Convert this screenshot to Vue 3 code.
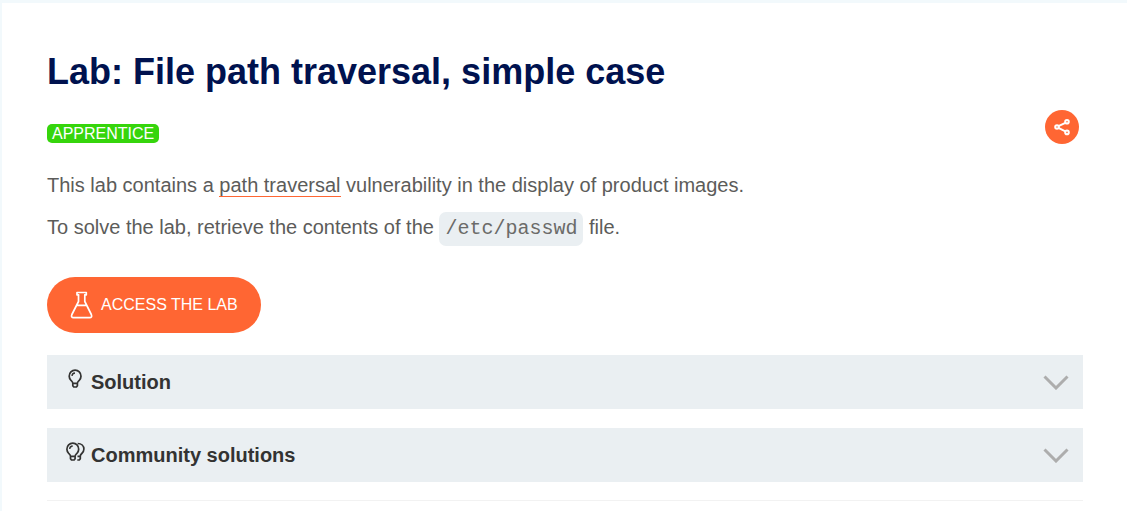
<script setup>
const sections = [
  { id: 'solution', title: 'Solution', double: false },
  { id: 'community', title: 'Community solutions', double: true },
]
</script>

<template>
  <main class="page">
    <h1 class="title">Lab: File path traversal, simple case</h1>

    <div class="meta">
      <span class="level">APPRENTICE</span>
      <button class="share" type="button" aria-label="Share">
        <svg width="34" height="34" viewBox="0 0 34 34" fill="none" stroke="#fff" stroke-width="2" aria-hidden="true">
          <path d="M13.4 16.2 20.4 12.8M13.4 17.9 20.4 21.4" />
          <circle cx="12" cy="17" r="1.800" />
          <circle cx="22" cy="11.800" r="1.800" />
          <circle cx="22" cy="22.400" r="1.800" />
        </svg>
      </button>
    </div>

    <p class="text">This lab contains a <a class="link" href="#path-traversal">path traversal</a> vulnerability in the display of product images.</p>
    <p class="text">To solve the lab, retrieve the contents of the <code class="code">/etc/passwd</code> file.</p>

    <a class="access" href="#access-lab">
      <svg width="24" height="28" viewBox="0 0 24 28" fill="none" stroke="#fff" stroke-width="1.700" stroke-linejoin="round" stroke-linecap="round" aria-hidden="true">
        <path d="M8.500 4V10.500L1.900 23.500C1 25.500 1.800 26.700 3.500 26.700H19.700C21.400 26.700 22.200 25.500 21.300 23.500L14.800 10.500V4M7 14.300H16.300" />
        <path d="M7 1.500H16.300V3.800H14.800M7 1.500V3.800H8.500" />
      </svg>
      <span>ACCESS THE LAB</span>
    </a>

    <details v-for="s in sections" :key="s.id" class="panel">
      <summary class="summary">
        <svg class="bulb" width="20" height="20" viewBox="0 0 20 20" fill="none" stroke="#333332" stroke-width="1.700" stroke-linejoin="round" aria-hidden="true">
          <g v-if="s.double">
            <path d="M5.500 14.300C5.500 12.800 4.800 12.300 3.700 11.300A5.900 5.900 0 1 1 11.900 11.300C10.800 12.300 10.100 12.800 10.100 14.300ZM5.500 14.300V16.700L6.500 18H9.100L10.100 16.700V14.300" />
            <path d="M4.700 7A3.100 3.100 0 0 1 7.700 4" stroke-width="1.300" />
            <path d="M12.700 1.500C16.400 1.500 18.900 4 18.900 7.100C18.900 9.300 18 10.500 16.800 11.500C15.700 12.400 15.300 13 15.300 14.300V16.700L14.300 18H12.300M12.500 14.300H15.300" />
          </g>
          <g v-else>
            <path d="M7.800 14.300C7.800 12.800 7.100 12.300 6 11.300A5.900 5.900 0 1 1 14.200 11.300C13.100 12.300 12.400 12.800 12.400 14.300ZM7.800 14.300V16.700L8.800 18H11.400L12.400 16.700V14.300" />
            <path d="M7 7A3.100 3.100 0 0 1 10 4" stroke-width="1.300" />
          </g>
        </svg>
        <span class="label">{{ s.title }}</span>
        <svg class="chevron" width="26" height="16" viewBox="0 0 26 16" fill="none" stroke="#adadad" stroke-width="3" aria-hidden="true">
          <path d="M1.500 2.500 13 14 24.500 2.500" />
        </svg>
      </summary>
    </details>
    <hr class="rule" />
  </main>
</template>

<style>
body {
  background: #fff;
}
</style>

<style scoped>
.page {
  box-sizing: border-box;
  min-height: 100vh;
  padding: 44px 44px 10px 45px;
  border-top: 3px solid #f2f9fc;
  border-left: 2px solid #f2f9fc;
  font-family: "Liberation Sans", Arial, sans-serif;
  color: #5c5c5a;
}
.title {
  margin: 0;
  font-size: 36px;
  line-height: 50px;
  color: #00124f;
}
.meta {
  display: flex;
  align-items: center;
  justify-content: space-between;
  margin-top: 13px;
  padding-right: 4px;
}
.level {
  margin-top: 12px;
  padding: 0 5px;
  border-radius: 5px;
  background: #36d50c;
  color: #fff;
  font-size: 16px;
  line-height: 19px;
}
.share {
  width: 34px;
  height: 34px;
  padding: 0;
  border: 0;
  border-radius: 50%;
  background: #f63;
}
.share svg {
  display: block;
}
.text {
  margin: 20px 0 0;
  font-size: 20px;
  line-height: 42px;
}
.text + .text {
  margin-top: 0;
}
.link {
  color: inherit;
  text-decoration: none;
  border-bottom: 1px solid #f63;
}
.code {
  display: inline-block;
  padding: 0 6px;
  border-radius: 7px;
  background: #eaeff2;
  color: #6b6b69;
  font-family: "Liberation Mono", "Courier New", monospace;
  font-size: 20px;
  line-height: 34px;
}
.access {
  display: flex;
  width: fit-content;
  align-items: center;
  gap: 7px;
  height: 56px;
  margin: 29px 0 22px;
  padding: 0 23px;
  border-radius: 28px;
  background: #f63;
  color: #fff;
  font-size: 16px;
  text-decoration: none;
}
.panel {
  margin-bottom: 19px;
  background: #eaeff2;
}
.panel:last-of-type {
  margin-bottom: 18px;
}
.summary {
  display: flex;
  align-items: center;
  height: 54px;
  padding: 0 14px 0 18px;
  list-style: none;
  color: #333332;
  font-size: 20px;
  font-weight: bold;
}
.bulb {
  margin: 0 6px 6px 0;
}
.label {
  flex: 1;
}
.rule {
  margin: 0;
  border: 0;
  border-top: 1px solid #f2f2f2;
}
</style>
